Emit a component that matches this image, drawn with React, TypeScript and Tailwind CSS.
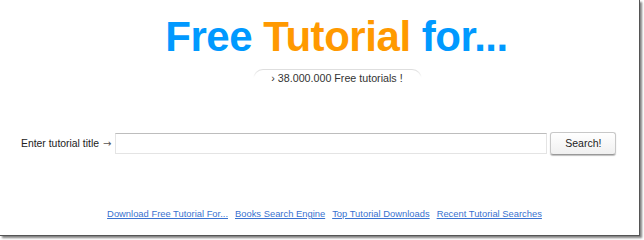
export default function App() {
  const links = [
    "Download Free Tutorial For...",
    "Books Search Engine",
    "Top Tutorial Downloads",
    "Recent Tutorial Searches",
  ];

  return (
    <div className="h-[240px] w-[644px] bg-white font-['Liberation_Sans',Arial,sans-serif]">
      <div className="flex h-[236px] w-[640px] flex-col border-b border-r border-[#555] bg-white shadow-[2px_2px_2px_rgba(0,0,0,0.5)]">
        {/* heading */}
        <div className="flex justify-center pl-[34px] pt-[16px]">
          <h1 className="text-[42px] font-bold leading-none tracking-[-0.45px] text-[#0099ff]">
            Free <span className="text-[#ff9900]">Tutorial</span> for...
          </h1>
        </div>

        <div className="mt-[11px] flex justify-center pl-[35px]">
          <div className="rounded-t-[10px] bg-gradient-to-b from-[#dcdcdc] via-white to-white px-px pt-px">
            <div className="h-[17px] w-[167px] rounded-t-[9px] bg-white pt-[2px] text-center text-[10.7px] leading-[13px] text-[#333]">
              › 38.000.000 Free tutorials !
            </div>
          </div>
        </div>

        {/* search row */}
        <form className="mt-[45px] flex items-center pl-[21px]" onSubmit={(e) => e.preventDefault()}>
          <label className="flex items-baseline gap-[4px] text-[10.4px] text-[#222]">
            Enter tutorial title
            <span className="font-['DejaVu_Sans',sans-serif] text-[10px] text-[#555]">→</span>
          </label>
          <input
            type="text"
            className="ml-[4px] h-[21px] w-[432px] border border-[#e4e4e4] border-t-[#bdbdbd] bg-white outline-none"
          />
          <button
            type="submit"
            className="ml-[3px] h-[23px] w-[66px] rounded-[3px] border border-[#c8c8c8] border-b-[#999] bg-gradient-to-b from-white to-[#f0f0f0] text-[10.5px] text-[#222] shadow-[0_1px_1px_rgba(0,0,0,0.25)]"
          >
            Search!
          </button>
        </form>

        {/* footer links */}
        <div className="mt-[53px] flex justify-center gap-[7px] pl-[10px] text-[9.4px] leading-[12px]">
          {links.map((l) => (
            <a key={l} href="#" className="text-[#3a72d0] underline">
              {l}
            </a>
          ))}
        </div>
      </div>
    </div>
  );
}
